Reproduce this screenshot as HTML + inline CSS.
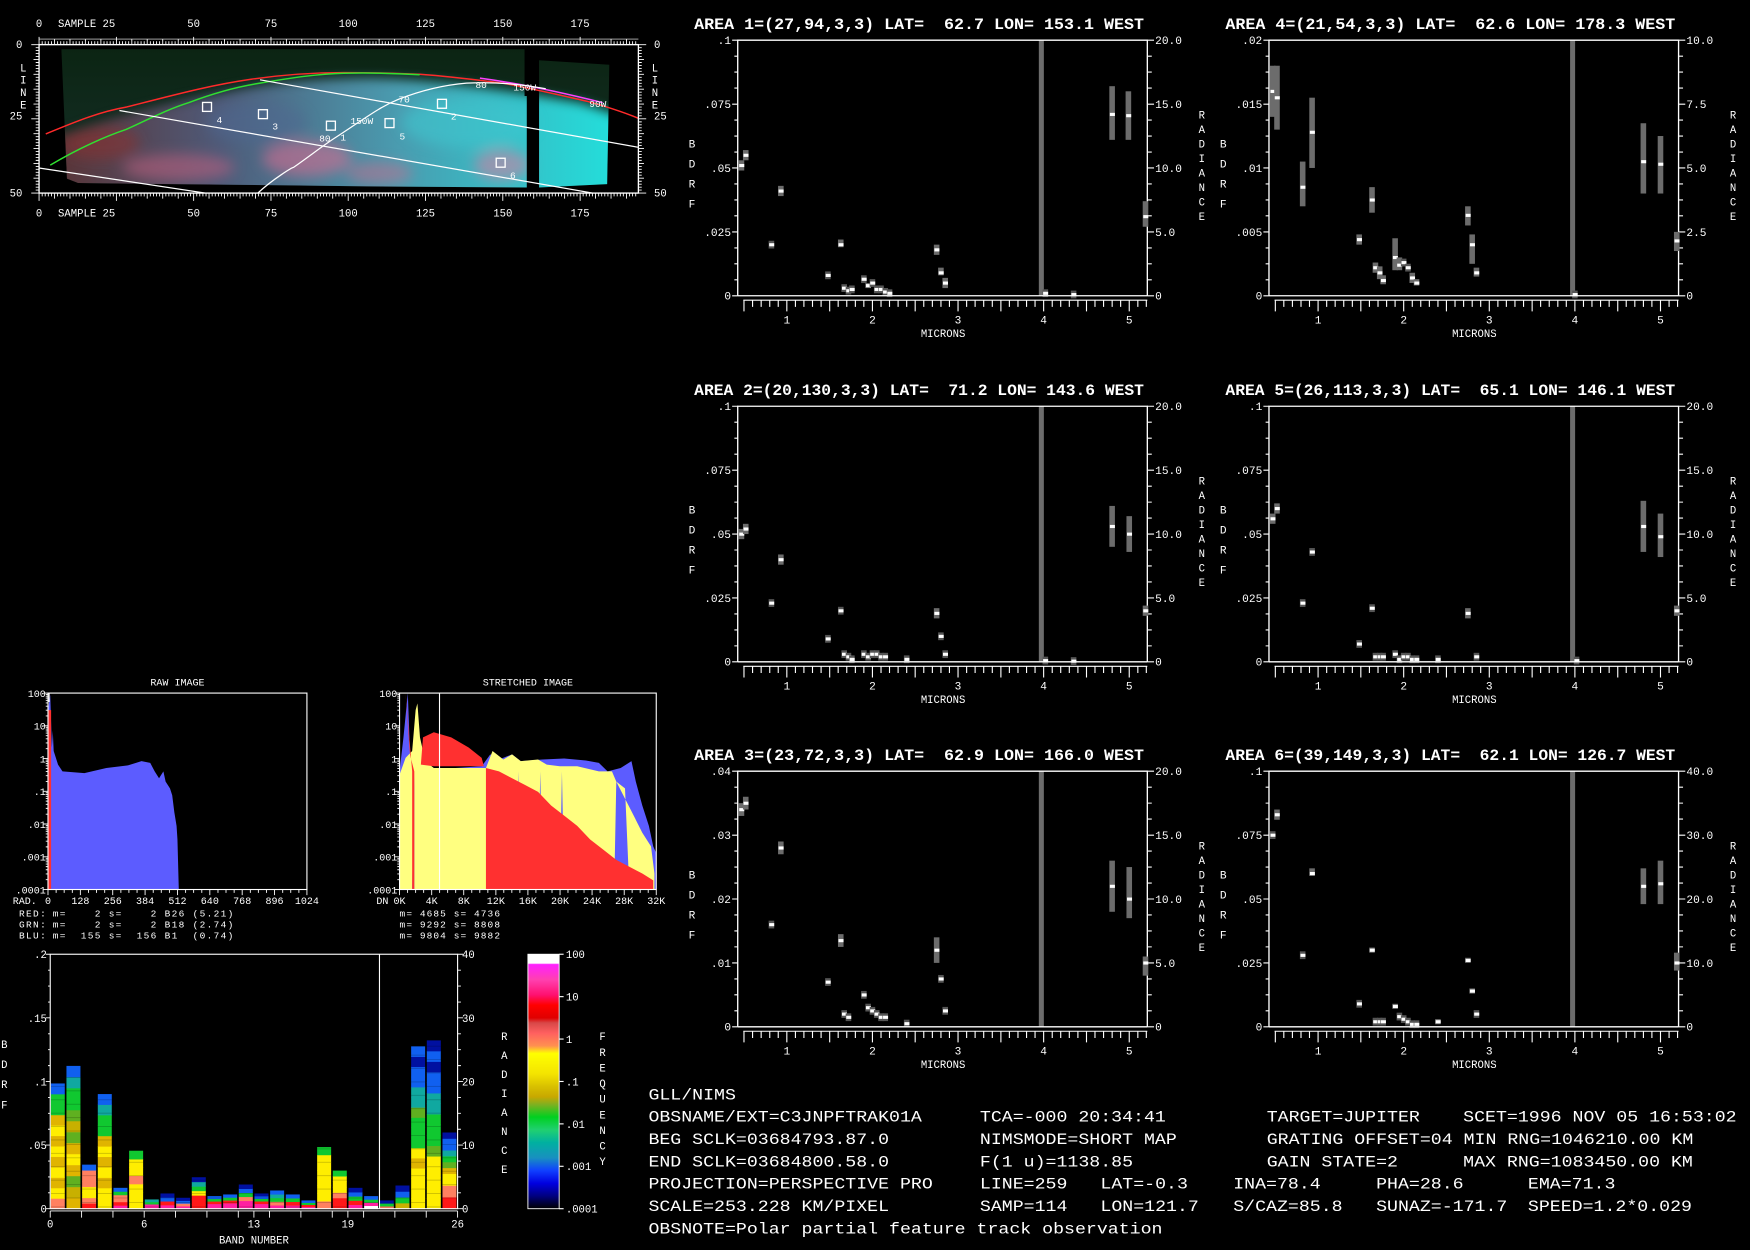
<!DOCTYPE html>
<html><head><meta charset="utf-8"><style>
html,body{margin:0;padding:0;background:#000;width:1750px;height:1250px;overflow:hidden}
svg{display:block}
text{font-family:"Liberation Mono",monospace;fill:#fff;white-space:pre}
</style></head><body>
<svg id="s" width="1750" height="1250" viewBox="0 0 1568 1120" xmlns="http://www.w3.org/2000/svg" xml:space="preserve">
<defs>
<filter id="bl" x="-50%" y="-50%" width="200%" height="200%"><feGaussianBlur stdDeviation="6"/></filter>
<filter id="bl2" x="-50%" y="-50%" width="200%" height="200%"><feGaussianBlur stdDeviation="5"/></filter>
<linearGradient id="lit" x1="0" x2="1" y1="0" y2="0">
<stop offset="0" stop-color="#5a3030"/><stop offset="0.3" stop-color="#4f5a78"/><stop offset="0.6" stop-color="#4a9cb0"/><stop offset="1" stop-color="#1ee6e0"/></linearGradient>
<linearGradient id="dark" x1="0" x2="0" y1="0" y2="1">
<stop offset="0" stop-color="#0b2412"/><stop offset="1" stop-color="#16302a"/></linearGradient>
<linearGradient id="cb" x1="0" x2="0" y1="0" y2="1">
<stop offset="0" stop-color="#fff"/><stop offset="0.035" stop-color="#fff"/><stop offset="0.04" stop-color="#ff20ff"/><stop offset="0.1" stop-color="#ff40b0"/><stop offset="0.16" stop-color="#ff1070"/><stop offset="0.2" stop-color="#ff0000"/><stop offset="0.25" stop-color="#e00000"/><stop offset="0.27" stop-color="#d84848"/><stop offset="0.31" stop-color="#ff6060"/><stop offset="0.36" stop-color="#ff9050"/><stop offset="0.39" stop-color="#ffff00"/><stop offset="0.47" stop-color="#f4e400"/><stop offset="0.52" stop-color="#d8c000"/><stop offset="0.56" stop-color="#c8a800"/><stop offset="0.59" stop-color="#80b020"/><stop offset="0.64" stop-color="#00d020"/><stop offset="0.69" stop-color="#20d070"/><stop offset="0.74" stop-color="#00b0a0"/><stop offset="0.8" stop-color="#1890c0"/><stop offset="0.85" stop-color="#1040ff"/><stop offset="0.9" stop-color="#0000e0"/><stop offset="0.95" stop-color="#000080"/><stop offset="1" stop-color="#000"/></linearGradient>
<clipPath id="mapclip"><rect x="35" y="40" width="537" height="133"/></clipPath>
<clipPath id="imgclip"><path d="M55,44 L470,44 L470,86 L483,86 L483,54 L546,58 L544,165 L483,168 L472,168 L330,167 L250,166 L70,164 L60,160 Z"/></clipPath>
<mask id="litmask"><rect x="0" y="0" width="600" height="200" fill="#000"/><path filter="url(#bl2)" d="M30,130 C80,110 140,94 225,78 C260,72 300,70 330,70 C380,71 440,78 520,92 L580,112 L580,190 L30,190 Z" fill="#fff"/></mask>
</defs>
<g clip-path="url(#mapclip)">
<g clip-path="url(#imgclip)">
<rect x="35" y="40" width="537" height="133" fill="url(#dark)"/>
<g mask="url(#litmask)">
<rect x="35" y="40" width="537" height="133" fill="url(#lit)"/>
<g filter="url(#bl)" opacity="0.55">
<ellipse cx="275" cy="142" rx="40" ry="16" fill="#e06a90"/>
<ellipse cx="160" cy="150" rx="50" ry="12" fill="#c06080"/>
<ellipse cx="90" cy="128" rx="35" ry="15" fill="#8a3030"/>
<ellipse cx="450" cy="148" rx="25" ry="14" fill="#e07aa0"/>
<ellipse cx="340" cy="155" rx="30" ry="10" fill="#c07090"/>
<ellipse cx="420" cy="110" rx="60" ry="22" fill="#40c8d0"/>
<ellipse cx="230" cy="110" rx="45" ry="18" fill="#506890"/>
</g>
</g>
<rect x="472" y="86" width="11" height="90" fill="#000"/>
</g>
<g fill="none" stroke-width="1.3">
<path d="M41,120 C70,108 90,100 113,96 C160,84 190,76 225,71 C260,66 290,65 308,65 C340,65 360,66 376,66.5 C410,69 430,72 451,74.6 C480,80 505,86 527,91 C545,96 560,101 572,106" stroke="#ff2a2a"/>
<path d="M45,148 C70,133 95,122 113,116 C135,106 150,98 169,92 C190,84 210,78 233,74.5 C260,70 285,66 308,65.6 C340,65 360,66 376,67" stroke="#30e030"/>
<path d="M430,70 C460,74 500,82 540,92" stroke="#ff40ff"/>
<g stroke="#fff" stroke-width="1.1">
<path d="M107,99 L531,173"/>
<path d="M233,71.5 L572,132"/>
<path d="M35,150.5 L184,173"/>
<path d="M231,173 C245,160 262,150 263,150 C280,138 290,130 301,123 C330,104 340,96 357,89 C380,80 400,76 418,74.5 C445,73 470,76 489,79.5"/>
</g></g>
<g fill="none" stroke="#fff" stroke-width="1.2">
<rect x="181.5" y="91.8" width="8" height="8"/><rect x="231.6" y="98.3" width="8" height="8"/><rect x="292.5" y="108.6" width="8" height="8"/><rect x="345" y="106.3" width="8" height="8"/><rect x="392" y="89" width="8" height="8"/><rect x="444.6" y="141.8" width="8" height="8"/>
</g>
<g font-size="8.5" fill="#fff">
<text x="194" y="110">4</text><text x="244" y="116">3</text><text x="286" y="127">80</text><text x="305" y="126">1</text><text x="314" y="111">150W</text><text x="358" y="125">5</text><text x="357" y="92">70</text><text x="404" y="107">2</text><text x="457" y="160">6</text><text x="426" y="79">80</text><text x="460" y="81">150W</text><text x="528" y="96">90W</text>
</g>
</g>
<rect x="35" y="40" width="537" height="133" fill="none" stroke="#fff" stroke-width="1.2"/>
<g id="dyn"></g>
</svg>
<script>
var NS="http://www.w3.org/2000/svg";
var G=document.getElementById('dyn');
function el(t,a,txt,p){var e=document.createElementNS(NS,t);for(var k in a)e.setAttribute(k,a[k]);if(txt!==undefined&&txt!==null)e.textContent=txt;(p||G).appendChild(e);return e;}
function txt(x,y,s,fs,extra){var a={x:x,y:y,'font-size':fs};if(extra)for(var k in extra)a[k]=extra[k];var e=el('text',a,s);e.setAttributeNS("http://www.w3.org/XML/1998/namespace","xml:space","preserve");return e;}
function line(x1,y1,x2,y2,c,w){return el('line',{x1:x1,y1:y1,x2:x2,y2:y2,stroke:c||'#fff','stroke-width':w||1});}
function rect(x,y,w,h,f){return el('rect',{x:x,y:y,width:w,height:h,fill:f});}

(function(){
 var x0=35,pp=2.77,d="";
 for(var s=0;s<=193;s++){var x=x0+s*pp;var h=(s%25==0)?7:(s%5==0?5:3);d+="M"+x.toFixed(1)+",40v-"+h+"M"+x.toFixed(1)+",173v"+h;}
 for(var l=0;l<=50;l++){var y=40+l*2.66;var w=(l%25==0)?7:(l%5==0?5:3);d+="M35,"+y.toFixed(1)+"h-"+w+"M572,"+y.toFixed(1)+"h"+w;}
 el('path',{d:d,stroke:'#fff','stroke-width':0.8,fill:'none'});
 line(35,35,572,35,'#fff',0.6);
 var labs=[0,25,50,75,100,125,150,175];
 labs.forEach(function(v){var x=x0+v*pp; if(v==25){txt(52,24,"SAMPLE 25",9.5);txt(52,194,"SAMPLE 25",9.5);} else {txt(x,24,""+v,9.5,{'text-anchor':'middle'});txt(x,194,""+v,9.5,{'text-anchor':'middle'});}});
 [[0,43],[25,107],[50,176]].forEach(function(a){txt(20,a[1],""+a[0],9.5,{'text-anchor':'end'});txt(586,a[1],""+a[0],9.5);});
 "LINE".split("").forEach(function(c,i){txt(18,64+i*11,c,9.5);txt(584,64+i*11,c,9.5);});
})();

function panel(x0,y0,title,L,R,pts){
 var W=367,H=229;
 txt(x0-39,y0-10,title,14,{textLength:403,lengthAdjust:'spacingAndGlyphs','font-weight':'bold'});
 var bx=x0+44+(3.97-1)*76.7;
 rect(bx-2,y0,4.5,H,'#6c6c6c');
 var d="";
 for(var i=0;i<=16;i++){var y=y0+i*H/16;var m=(i%4==0);d+="M"+x0+","+y.toFixed(1)+"h-"+(m?5:3)+"M"+(x0+W)+","+y.toFixed(1)+"h"+(m?6:4);}
 for(var k=5;k<=52;k++){var lam=k/10;var x=x0+44+(lam-1)*76.7;if(x>x0+W+0.5)break;d+="M"+x.toFixed(1)+","+(y0+H+4)+"v"+(k%5==0?10:6);}
 el('path',{d:d,stroke:'#fff','stroke-width':1,fill:'none'});
 line(x0+5,y0+H+4,x0+W,y0+H+4);
 el('path',{d:"M"+x0+","+(y0+H)+"V"+y0+"H"+(x0+W)+"V"+(y0+H),stroke:'#fff','stroke-width':1.2,fill:'none'});
 for(var j=0;j<5;j++){var y=y0+j*H/4+3.5;txt(x0-6,y,L[j],10,{'text-anchor':'end'});txt(x0+W+7,y,R[j],10);}
 for(var n=1;n<=5;n++){txt(x0+44+(n-1)*76.7,y0+H+25,""+n,10,{'text-anchor':'middle'});}
 txt(x0+184,y0+H+37,"MICRONS",9.5,{'text-anchor':'middle'});
 "BDRF".split("").forEach(function(c,i){txt(x0-44,y0+96+i*18,c,10);});
 "RADIANCE".split("").forEach(function(c,i){txt(x0+413,y0+70+i*13,c,9.5);});
 var max=pts.max;
 pts.p.forEach(function(q){
  var x=x0+44+(q[0]-1)*76.7, y=y0+H-q[1]/max*H;
  if(q.length>2){var y1=y0+H-q[3]/max*H,y2=y0+H-q[2]/max*H;rect(x-2.5,y1,5,y2-y1,'#6c6c6c');}
  else rect(x-2.5,y-3.5,5,7,'#555');
  rect(x-2,y-1.3,4.5,2.8,'#fff');
 });
 line(x0,y0+H,x0+W,y0+H,'#fff',1.2);
}
panel(661,36,"AREA 1=(27,94,3,3) LAT=  62.7 LON= 153.1 WEST",[".1",".075",".05",".025","0"],["20.0","15.0","10.0","5.0","0"],
{max:0.1,p:[[0.47,.051,.049,.053],[0.52,.055,.053,.057],[0.82,.020],[0.93,.041,.039,.043],[1.48,.008],[1.63,.020,.019,.022],[1.67,.003],[1.72,.002],[1.76,.0025],[1.9,.0065],[1.95,.004,.003,.005],[2.0,.005],[2.05,.0025],[2.1,.0025],[2.15,.0015],[2.2,.001],[2.75,.018,.016,.020],[2.8,.009,.008,.011],[2.85,.005,.003,.007],[4.02,.001],[4.35,.0005],[4.8,.071,.061,.082],[4.99,.0705,.061,.080],[5.19,.031,.027,.037]]});
panel(1137,36,"AREA 4=(21,54,3,3) LAT=  62.6 LON= 178.3 WEST",[".02",".015",".01",".005","0"],["10.0","7.5","5.0","2.5","0"],
{max:0.02,p:[[0.47,.016,.014,.018],[0.52,.0155,.013,.018],[0.82,.0085,.007,.0105],[0.93,.0128,.010,.0155],[1.48,.0044,.0040,.0048],[1.63,.0075,.0065,.0085],[1.67,.0022,.0018,.0026],[1.72,.0018,.0013,.0023],[1.76,.0012,.0009,.0016],[1.9,.003,.002,.0045],[1.95,.0024,.0020,.0030],[2.0,.0026],[2.05,.0022],[2.1,.0014,.0010,.0018],[2.15,.001,.0008,.0013],[2.75,.0063,.0055,.007],[2.8,.004,.0025,.0048],[2.85,.0018,.0015,.0022],[4.0,.0001],[4.8,.0105,.008,.0135],[5.0,.0103,.008,.0125],[5.19,.0043,.0035,.005]]});
panel(661,364,"AREA 2=(20,130,3,3) LAT=  71.2 LON= 143.6 WEST",[".1",".075",".05",".025","0"],["20.0","15.0","10.0","5.0","0"],
{max:0.1,p:[[0.47,.050,.048,.052],[0.52,.052,.050,.054],[0.82,.023],[0.93,.040,.038,.042],[1.48,.009],[1.63,.020],[1.67,.003],[1.72,.002],[1.76,.001],[1.9,.003],[1.95,.002],[2.0,.003],[2.05,.003],[2.1,.002],[2.15,.002],[2.4,.001],[2.75,.019,.017,.021],[2.8,.010],[2.85,.003],[4.02,.0005],[4.35,.0003],[4.8,.053,.045,.061],[5.0,.050,.043,.057],[5.19,.020,.018,.022]]});
panel(1137,364,"AREA 5=(26,113,3,3) LAT=  65.1 LON= 146.1 WEST",[".1",".075",".05",".025","0"],["20.0","15.0","10.0","5.0","0"],
{max:0.1,p:[[0.47,.056,.054,.058],[0.52,.060,.058,.062],[0.82,.023],[0.93,.043],[1.48,.007],[1.63,.021],[1.67,.002],[1.72,.002],[1.76,.002],[1.9,.003],[1.95,.001],[2.0,.002],[2.05,.002],[2.1,.001],[2.15,.001],[2.4,.001],[2.75,.019,.017,.021],[2.85,.002],[4.02,.0005],[4.8,.053,.043,.063],[5.0,.049,.041,.058],[5.19,.020,.018,.022]]});
panel(661,691,"AREA 3=(23,72,3,3) LAT=  62.9 LON= 166.0 WEST",[".04",".03",".02",".01","0"],["20.0","15.0","10.0","5.0","0"],
{max:0.04,p:[[0.47,.034,.033,.035],[0.52,.035,.034,.036],[0.82,.016],[0.93,.028,.027,.029],[1.48,.007],[1.63,.0135,.0125,.0145],[1.67,.002],[1.72,.0015],[1.9,.005],[1.95,.003],[2.0,.0025],[2.05,.002],[2.1,.0015],[2.15,.0015],[2.4,.0005],[2.75,.012,.010,.014],[2.8,.0075],[2.85,.0025],[4.8,.022,.018,.026],[5.0,.020,.017,.025],[5.19,.010,.008,.011]]});
panel(1137,691,"AREA 6=(39,149,3,3) LAT=  62.1 LON= 126.7 WEST",[".1",".075",".05",".025","0"],["40.0","30.0","20.0","10.0","0"],
{max:0.1,p:[[0.47,.075],[0.52,.083,.081,.085],[0.82,.028],[0.93,.060,.059,.062],[1.48,.009],[1.63,.030,.029,.031],[1.67,.002],[1.72,.002],[1.76,.002],[1.9,.008,.007,.009],[1.95,.004],[2.0,.003],[2.05,.002],[2.1,.001],[2.15,.001],[2.4,.002,.001,.003],[2.75,.026,.025,.027],[2.8,.014,.013,.015],[2.85,.005],[4.8,.055,.048,.062],[5.0,.056,.048,.065],[5.19,.025,.022,.029]]});

function histAxes(x0,x1,y0,y1,title,labs,pref){
 txt((x0+x1)/2,y0-7,title,9,{'text-anchor':'middle'});
 el('rect',{x:x0,y:y0,width:x1-x0,height:y1-y0,fill:'none',stroke:'#fff','stroke-width':1});
 var d="",dec=(y1-y0)/6;
 for(var k=0;k<6;k++){for(var m=1;m<=9;m++){var y=y0+(k+1)*dec-Math.log10(m)*dec;d+="M"+x0+","+y.toFixed(1)+"h-"+(m==1?4:2);}}
 d+="M"+x0+","+y0+"h-4";
 var n=labs.length-1;
 for(var i=0;i<=n*4;i++){var x=x0+i*(x1-x0)/(n*4);d+="M"+x.toFixed(1)+","+y1+"v"+(i%4==0?5:3);}
 el('path',{d:d,stroke:'#fff','stroke-width':0.8,fill:'none'});
 ["100","10","1",".1",".01",".001",".0001"].forEach(function(s,i){txt(x0-2,y0+i*dec+3.5,s,9,{'text-anchor':'end'});});
 labs.forEach(function(s,i){txt(x0+i*(x1-x0)/n,y1+13,s,9,{'text-anchor':'middle'});});
 txt(x0-10,y1+13,pref,9,{'text-anchor':'end'});
}
function mapPts(pts,x0,x1,y0,y1,zx0,zx1){return pts.map(function(p){return (x0+(p[0]-zx0)/(zx1-zx0)*(x1-x0)).toFixed(1)+","+(y0+(p[1]-70)/577*(y1-y0)).toFixed(1);}).join(" ");}
(function(){
 var x0=43,x1=275,y0=621,y1=797;
 var blue=[[117,647],[117,120],[122,75],[126,230],[128,180],[130,240],[140,280],[150,300],[200,305],[250,290],[300,282],[330,270],[350,275],[360,300],[370,320],[380,300],[385,330],[395,350],[400,370],[405,420],[410,460],[412,500],[415,647]];
 el('polygon',{points:mapPts(blue,x0,x1,y0,y1,117,707),fill:'#5c5cff'});
 el('polygon',{points:mapPts([[117,647],[117,120],[124,120],[124,647]],x0,x1,y0,y1,117,707),fill:'#ff3030'});
 line(x0+1,y0,x0+1,y0+8,'#fff',1);
 histAxes(x0,x1,y0,y1,"RAW IMAGE",["0","128","256","384","512","640","768","896","1024"],"RAD.");
})();
(function(){
 var x0=358,x1=588,y0=621,y1=797,a=921,b=1512;
 function P(pts,c){el('polygon',{points:mapPts(pts,x0,x1,y0,y1,a,b),fill:c});}
 P([[921,647],[921,300],[930,200],[940,70],[945,240],[955,280],[970,290],[1000,292],[1050,290],[1110,285],[1130,250],[1150,265],[1180,250],[1200,270],[1250,265],[1300,262],[1350,268],[1380,275],[1400,300],[1430,290],[1455,270],[1465,330],[1480,400],[1495,460],[1505,520],[1512,540],[1512,647]],'#5c5cff');
 P([[921,647],[921,310],[935,260],[950,240],[958,120],[962,100],[968,200],[980,270],[1000,290],[1120,290],[1135,240],[1160,265],[1180,250],[1200,270],[1240,265],[1260,280],[1290,285],[1330,285],[1380,300],[1410,300],[1420,330],[1440,380],[1460,430],[1480,480],[1500,520],[1508,600],[1508,647],[1450,647],[1440,350],[1420,330],[1415,647],[1300,647],[1295,300],[1290,647],[1250,647],[1245,300],[1240,647],[1200,647],[1195,300],[1190,647],[955,647],[955,300],[950,647]],'#ffff80');
 P([[950,647],[950,300],[935,70],[945,250],[955,300],[955,647]],'#ff3030');
 P([[970,280],[975,200],[1000,185],[1040,200],[1080,230],[1110,260],[1115,285],[1000,285]],'#ff3030');
 P([[1120,647],[1120,290],[1150,300],[1180,320],[1210,340],[1240,360],[1270,400],[1300,430],[1330,460],[1360,500],[1390,530],[1420,560],[1450,580],[1480,600],[1505,620],[1505,647]],'#ff3030');
 line(x0+(1013-a)/(b-a)*(x1-x0),y0,x0+(1013-a)/(b-a)*(x1-x0),y1,'#fff',1);
 histAxes(x0,x1,y0,y1,"STRETCHED IMAGE",["0K","4K","8K","12K","16K","20K","24K","28K","32K"],"DN");
})();
(function(){
 var rows=[["RED:","#ff3030"," m=    2 s=    2 B26 (5.21)"],["GRN:","#ffff80"," m=    2 s=    2 B18 (2.74)"],["BLU:","#6060ff"," m=  155 s=  156 B1  (0.74)"]];
 rows.forEach(function(r,i){var y=821+i*10;txt(17,y,r[0],8.5,{fill:r[1],textLength:24});txt(41,y,r[2],8.5,{textLength:168,lengthAdjust:'spacing'});});
 ["m= 4685 s= 4736","m= 9292 s= 8808","m= 9804 s= 9882"].forEach(function(s,i){txt(358,821+i*10,s,8.5,{textLength:90,lengthAdjust:'spacing'});});
})();
(function(){
 var x0=45,x1=410,y0=855,y1=1083,H=y1-y0;
 var C={Y:'#ffee00',O:'#c8b000',K:'#e0b400',G:'#10c830',g:'#60b020',T:'#10a8a0',B:'#1060f0',N:'#0010a0',R:'#ff1818',P:'#ff20a0',S:'#ff8060',W:'#ffffff'};
 var tops=[430,377,675,462,745,633,780,762,775,713,770,765,735,762,753,765,783,622,693,745,770,783,738,318,300,578];
 var cols=["SYKYKYKYKGGB","KOgKYKgOgGGTB","RSYYSSSB","YYKYKYKGGTB","PRSSGB","YYYSYYG","PPGT","PRBN","PSBN","RRRYGTN","PPRGB","PPRGB","PPSGBN","PPRGBN","PSGTB","PRGB","PRGB","SYYYYYYG","RRSYYYG","PRGBN","WPGB","SGN","OGBN","YYYYKYGGGgTTBBNB","YYYYYgGGGTTBBNBN","RRSSYYKgGTBBN"];
 var bw=(x1-x0)/26;
 for(var i=0;i<26;i++){
  var top=y0+(tops[i]-40)/768*H;var h=y1-top;var s=cols[i];var n=s.length;
  for(var j=0;j<n;j++){var segH=h/n;rect(x0+i*bw+0.5,y1-(j+1)*segH,bw-1.5,segH+0.4,C[s[j]]);}
  for(var k=0;k<h/4;k++){if((k*7+i)%3==0)rect(x0+i*bw+0.5,y1-k*4-2,bw-1.5,0.8,'rgba(0,0,0,0.2)');}
 }
 el('rect',{x:x0,y:y0,width:x1-x0,height:H,fill:'none',stroke:'#fff','stroke-width':1});
 var vx=x0+(902-118)/970*(x1-x0);line(vx,y0,vx,y1,'#fff',1);
 var d="";
 for(var i=0;i<=16;i++){var y=y0+i*H/16;d+="M"+x0+","+y.toFixed(1)+"h-"+(i%4==0?4:2)+"M"+x1+","+y.toFixed(1)+"h"+(i%4==0?5:3);}
 for(var b=0;b<=26;b++){var x=x0+b*bw;if(b%2==0||b==13||b==19)d+="M"+x.toFixed(1)+","+(y1+2)+"v6";}
 el('path',{d:d,stroke:'#fff','stroke-width':0.8,fill:'none'});
 line(x0,y1+2,x1,y1+2,'#fff',0.8);
 [".2",".15",".1",".05","0"].forEach(function(s,i){txt(x0-3,y0+i*H/4+3.5,s,9.5,{'text-anchor':'end'});});
 ["40","30","20","10","0"].forEach(function(s,i){txt(x1+4,y0+i*H/4+3.5,s,9.5);});
 [["0",0],["6",6],["13",13],["19",19],["26",26]].forEach(function(a){txt(x0+a[1]*bw,y1+17,a[0],9.5,{'text-anchor':'middle'});});
 txt((x0+x1)/2,y1+31,"BAND NUMBER",9.5,{'text-anchor':'middle'});
 "BDRF".split("").forEach(function(c,i){txt(1,y0+84+i*18,c,9.5);});
 "RADIANCE".split("").forEach(function(c,i){txt(449,y0+77+i*17,c,9.5);});
 "FREQUENCY".split("").forEach(function(c,i){txt(537,y0+77+i*14,c,9.5);});
 rect(473,y0,28,H,'url(#cb)');
 el('rect',{x:473,y:y0,width:28,height:H,fill:'none',stroke:'#fff','stroke-width':0.8});
 ["100","10","1",".1",".01",".001",".0001"].forEach(function(s,i){var y=y0+i*H/6;line(501,y,505,y);txt(507,y+3.5,s,9.5);});
})();
(function(){
 var cw=9.8;
 function T(x,y,s){txt(x,y,s,14,{textLength:(s.length*cw).toFixed(1),lengthAdjust:'spacingAndGlyphs'});}
 var rows=[
 [985,[[581,"GLL/NIMS"]]],
 [1005,[[581,"OBSNAME/EXT=C3JNPFTRAK01A"],[878,"TCA=-000 20:34:41"],[1135,"TARGET=JUPITER"],[1311,"SCET=1996 NOV 05 16:53:02"]]],
 [1025,[[581,"BEG SCLK=03684793.87.0"],[878,"NIMSMODE=SHORT MAP"],[1135,"GRATING OFFSET=04 MIN RNG=1046210.00 KM"]]],
 [1045,[[581,"END SCLK=03684800.58.0"],[878,"F(1 u)=1138.85"],[1135,"GAIN STATE=2"],[1311,"MAX RNG=1083450.00 KM"]]],
 [1065,[[581,"PROJECTION=PERSPECTIVE PRO"],[878,"LINE=259"],[986,"LAT=-0.3"],[1105,"INA=78.4"],[1233,"PHA=28.6"],[1369,"EMA=71.3"]]],
 [1085,[[581,"SCALE=253.228 KM/PIXEL"],[878,"SAMP=114"],[986,"LON=121.7"],[1105,"S/CAZ=85.8"],[1233,"SUNAZ=-171.7"],[1369,"SPEED=1.2*0.029"]]],
 [1105,[[581,"OBSNOTE=Polar partial feature track observation"]]]];
 rows.forEach(function(r){r[1].forEach(function(c){T(c[0],r[0],c[1]);});});
})();
</script>
</body></html>
